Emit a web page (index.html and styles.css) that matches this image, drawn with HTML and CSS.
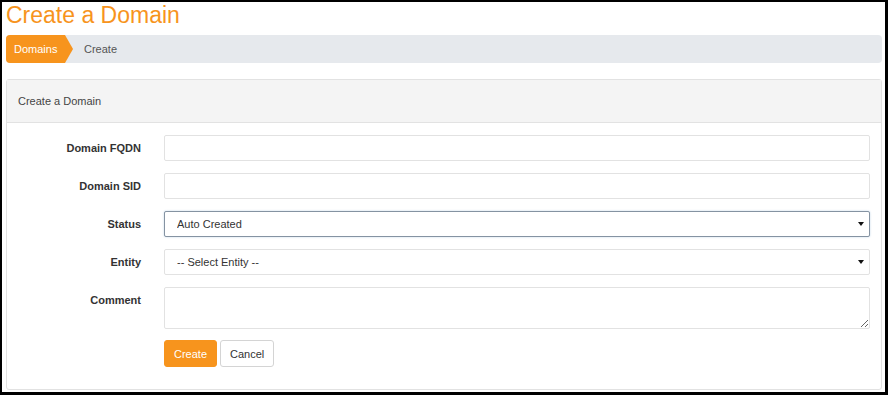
FILE: index.html
```html
<!DOCTYPE html>
<html>
  <head>
    <meta charset="utf-8">
    <meta name="viewport" content="width=device-width, initial-scale=1">
    <title>Create a Domain</title>
    <link rel="stylesheet" href="styles.css">
  </head>

  <body>
  <div class="frame">
    <h1 class="page-title">Create a Domain</h1>

    <div class="crumbs">
      <a class="crumb-first" href="#">Domains</a>
      <span class="crumb">Create</span>
    </div>

    <div class="panel">
      <div class="panel-head">Create a Domain</div>
      <form class="panel-body">
        <div class="form-row">
          <label for="iptFqdn">Domain FQDN</label>
          <input type="text" id="iptFqdn" class="field">
        </div>
        <div class="form-row">
          <label for="iptSid">Domain SID</label>
          <input type="text" id="iptSid" class="field">
        </div>
        <div class="form-row">
          <label for="selStatus">Status</label>
          <div class="select-wrap">
            <select id="selStatus" class="field focused">
              <option>Auto Created</option>
            </select>
          </div>
        </div>
        <div class="form-row">
          <label for="selEntity">Entity</label>
          <div class="select-wrap">
            <select id="selEntity" class="field">
              <option>-- Select Entity --</option>
            </select>
          </div>
        </div>
        <div class="form-row">
          <label for="iptComment">Comment</label>
          <textarea id="iptComment" class="field area"></textarea>
        </div>
        <div class="form-row">
          <span></span>
          <div class="actions">
            <button type="button" class="btn btn-create">Create</button>
            <button type="button" class="btn btn-cancel">Cancel</button>
          </div>
        </div>
      </form>
    </div>
  </div>
  </body>
</html>
```

FILE: styles.css
```css
      html, body {
	  margin: 0;
	  padding: 0;
	  background: #fff;
      }
      body {
	  font-family: "Liberation Sans", Arial, sans-serif;
	  font-size: 11px;
	  color: #333;
      }
      .frame {
	  box-sizing: border-box;
	  width: 888px;
	  height: 395px;
	  border: solid #000;
	  border-width: 2px 3px 3px 2px;
	  padding: 0 3px 0 4px;
	  overflow: hidden;
      }
      .page-title {
	  margin: 0;
	  font-size: 23px;
	  line-height: 27px;
	  font-weight: normal;
	  color: #f7941d;
      }
      .crumbs {
	  display: flex;
	  align-items: center;
	  height: 28px;
	  margin-top: 6px;
	  background-color: #e6e9ed;
	  border-radius: 4px;
	  overflow: hidden;
      }
      .crumb-first {
	  display: flex;
	  align-items: center;
	  height: 100%;
	  width: 67px;
	  box-sizing: border-box;
	  padding-left: 8px;
	  background-color: #f7941d;
	  color: #fff;
	  text-decoration: none;
	  clip-path: polygon(0 0, 59px 0, 67px 50%, 59px 100%, 0 100%);
      }
      .crumb {
	  margin-left: 11px;
	  color: #555;
      }
      .panel {
	  margin-top: 16px;
	  border: 1px solid #e2e2e2;
	  border-radius: 3px;
	  height: 311px;
	  box-sizing: border-box;
      }
      .panel-head {
	  height: 42px;
	  line-height: 42px;
	  padding-left: 11px;
	  background-color: #f4f4f4;
	  border-bottom: 1px solid #e2e2e2;
	  color: #444;
      }
      .panel-body {
	  padding: 12px 11px 0 0;
	  margin: 0;
      }
      .form-row {
	  display: grid;
	  grid-template-columns: 134px 1fr;
	  column-gap: 23px;
	  margin-bottom: 12px;
      }
      .form-row label {
	  text-align: right;
	  font-weight: bold;
	  line-height: 26px;
	  color: #333;
      }
      .field {
	  box-sizing: border-box;
	  width: 100%;
	  height: 26px;
	  margin: 0;
	  padding: 0 12px;
	  border: 1px solid #e2e2e2;
	  border-radius: 2px;
	  background: #fff;
	  font-family: "Liberation Sans", Arial, sans-serif;
	  font-size: 11px;
	  color: #333;
	  outline: none;
      }
      select.field {
	  appearance: none;
	  -webkit-appearance: none;
      }
      .field.focused {
	  border-color: #8593a2;
	  box-shadow: 0 0 2px rgba(102, 150, 200, 0.45);
      }
      .field.area {
	  height: 42px;
	  padding: 6px 12px;
	  resize: vertical;
      }
      .select-wrap {
	  position: relative;
      }
      .select-wrap::after {
	  content: "";
	  position: absolute;
	  right: 6px;
	  top: 11px;
	  border-left: 3px solid transparent;
	  border-right: 3px solid transparent;
	  border-top: 4px solid #111;
	  pointer-events: none;
      }
      .actions {
	  display: flex;
	  gap: 3px;
	  margin-top: -1px;
      }
      .btn {
	  height: 27px;
	  padding: 0 9px;
	  border-radius: 3px;
	  font-family: "Liberation Sans", Arial, sans-serif;
	  font-size: 11px;
	  cursor: pointer;
      }
      .btn-create {
	  width: 53px;
	  background-color: #f7941d;
	  border: 1px solid #f7941d;
	  color: #fff;
      }
      .btn-cancel {
	  width: 54px;
	  background-color: #fff;
	  border: 1px solid #d4d4d4;
	  color: #333;
      }
```
